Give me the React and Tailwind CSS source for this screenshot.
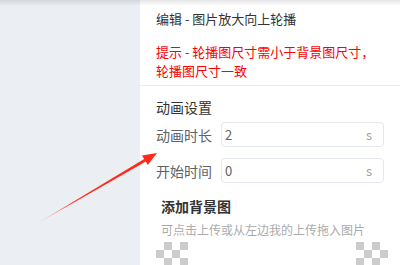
import React from "react";

function Checker({ phase = 0 }) {
  const cells = [];
  for (let r = 0; r < 3; r++) {
    for (let c = 0; c < 4; c++) {
      const on = (r + c + phase) % 2 === 1;
      cells.push(
        <div key={`${r}-${c}`} className={on ? "bg-[#cccccc]" : "bg-white"} />
      );
    }
  }
  return <div className="grid grid-cols-[repeat(4,8px)] grid-rows-[repeat(3,8px)]">{cells}</div>;
}

function Field({ label, value }) {
  return (
    <div className="flex items-center">
      <span className="w-[65px] text-[14px] leading-5 text-[#606266]">{label}</span>
      <div className="flex-1 h-[25px] flex items-center justify-between border border-[#e4e7ed] rounded-[4px] pl-[3px] pr-[11px]">
        <span className="text-[13px] text-[#606266]">{value}</span>
        <span className="text-[13px] text-[#a0a3a8]">s</span>
      </div>
    </div>
  );
}

export default function App() {
  return (
    <div className="relative w-[400px] h-[265px] flex bg-[#ebeef2] overflow-hidden font-['Noto_Sans_CJK_SC','Noto_Sans',sans-serif]">
      <div className="w-[140px] shrink-0" />
      <div className="flex-1 bg-white">
        <div className="pl-4 pr-4 pt-[9px] pb-[5px]">
          <p className="text-[13px] leading-5 text-[#333]">编辑 - 图片放大向上轮播</p>
          <p className="mt-[13px] text-[13px] leading-[19px] text-[#ff0000]">
            提示 - 轮播图尺寸需小于背景图尺寸，
            <br />
            轮播图尺寸一致
          </p>
        </div>
        <div className="h-px bg-[#ebebeb]" />
        <div className="pl-4 pr-4 pt-[11px]">
          <p className="text-[14px] leading-5 text-[#333]">动画设置</p>
          <div className="mt-[5px] flex flex-col gap-[11px]">
            <Field label="动画时长" value="2" />
            <Field label="开始时间" value="0" />
          </div>
        </div>
        <div className="pl-[21px] pr-4 mt-[13px]">
          <p className="text-[14px] leading-5 font-bold text-[#333]">添加背景图</p>
          <p className="mt-[5px] text-[12px] leading-[18px] text-[#aaaaaa]">可点击上传或从左边我的上传拖入图片</p>
        </div>
        <div className="mt-[3px] pl-4 pr-3 flex justify-between">
          <Checker phase={0} />
          <Checker phase={1} />
        </div>
      </div>

      <div className="pointer-events-none absolute inset-x-0 top-0 h-[6px] bg-gradient-to-b from-black/10 to-transparent" />

      <svg className="pointer-events-none absolute left-0 top-0" width="400" height="265">
        <defs>
          <linearGradient id="arr" x1="38" y1="223" x2="157" y2="153" gradientUnits="userSpaceOnUse">
            <stop offset="0" stopColor="#ff2a1a" stopOpacity="0.2" />
            <stop offset="0.3" stopColor="#ff2a1a" stopOpacity="1" />
            <stop offset="1" stopColor="#ff2a1a" stopOpacity="1" />
          </linearGradient>
        </defs>
        <polygon
          points="38,223 145.8,161.6 147.8,165 157,153 142,155.4 144.2,159"
          fill="url(#arr)"
        />
      </svg>
    </div>
  );
}
